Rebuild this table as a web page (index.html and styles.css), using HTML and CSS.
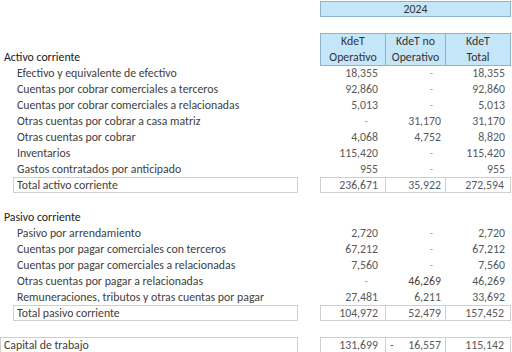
FILE: index.html
```html
<!DOCTYPE html>
<html lang="es">
<head>
<meta charset="utf-8">
<link rel="stylesheet" href="styles.css">
</head>
<body>
<div class="sheet">
  <div class="row">
    <div class="label"></div>
    <div class="year">2024</div>
  </div>
  <div class="row"></div>
  <div class="row head">
    <div class="label section">Activo corriente</div>
    <div class="hbox">
      <div class="hcell c1">KdeT<br>Operativo</div>
      <div class="hcell c2">KdeT no<br>Operativo</div>
      <div class="hcell c3">KdeT<br>Total</div>
    </div>
  </div>

  <div class="row"><div class="label item">Efectivo y equivalente de efectivo</div><div class="nums"><span class="n c1">18,355</span><span class="n c2 dash">-</span><span class="n c3">18,355</span></div></div>
  <div class="row"><div class="label item">Cuentas por cobrar comerciales a terceros</div><div class="nums"><span class="n c1">92,860</span><span class="n c2 dash">-</span><span class="n c3">92,860</span></div></div>
  <div class="row"><div class="label item">Cuentas por cobrar comerciales a relacionadas</div><div class="nums"><span class="n c1">5,013</span><span class="n c2 dash">-</span><span class="n c3">5,013</span></div></div>
  <div class="row"><div class="label item">Otras cuentas por cobrar a casa matriz</div><div class="nums"><span class="n c1 dash">-</span><span class="n c2">31,170</span><span class="n c3">31,170</span></div></div>
  <div class="row"><div class="label item">Otras cuentas por cobrar</div><div class="nums"><span class="n c1">4,068</span><span class="n c2">4,752</span><span class="n c3">8,820</span></div></div>
  <div class="row"><div class="label item">Inventarios</div><div class="nums"><span class="n c1">115,420</span><span class="n c2 dash">-</span><span class="n c3">115,420</span></div></div>
  <div class="row"><div class="label item">Gastos contratados por anticipado</div><div class="nums"><span class="n c1">955</span><span class="n c2 dash">-</span><span class="n c3">955</span></div></div>
  <div class="row"><div class="label"><div class="tbox indent">Total activo corriente</div></div><div class="nums boxed"><span class="n c1">236,671</span><span class="n c2">35,922</span><span class="n c3">272,594</span></div></div>
  <div class="row"></div>

  <div class="row"><div class="label section">Pasivo corriente</div></div>
  <div class="row"><div class="label item">Pasivo por arrendamiento</div><div class="nums"><span class="n c1">2,720</span><span class="n c2 dash">-</span><span class="n c3">2,720</span></div></div>
  <div class="row"><div class="label item">Cuentas por pagar comerciales con terceros</div><div class="nums"><span class="n c1">67,212</span><span class="n c2 dash">-</span><span class="n c3">67,212</span></div></div>
  <div class="row"><div class="label item">Cuentas por pagar comerciales a relacionadas</div><div class="nums"><span class="n c1">7,560</span><span class="n c2 dash">-</span><span class="n c3">7,560</span></div></div>
  <div class="row"><div class="label item">Otras cuentas por pagar a relacionadas</div><div class="nums"><span class="n c1 dash">-</span><span class="n c2 warm">46,269</span><span class="n c3">46,269</span></div></div>
  <div class="row"><div class="label item">Remuneraciones, tributos y otras cuentas por pagar</div><div class="nums"><span class="n c1">27,481</span><span class="n c2">6,211</span><span class="n c3">33,692</span></div></div>
  <div class="row"><div class="label"><div class="tbox indent">Total pasivo corriente</div></div><div class="nums boxed"><span class="n c1">104,972</span><span class="n c2">52,479</span><span class="n c3">157,452</span></div></div>
  <div class="row"></div>
  <div class="row"><div class="label"><div class="tbox flush">Capital de trabajo</div></div><div class="nums boxed"><span class="n c1">131,699</span><span class="n c2 neg"><span>-</span><span>16,557</span></span><span class="n c3">115,142</span></div></div>
</div>
</body>
</html>
```
FILE: styles.css
```css
html, body {
  margin: 0;
  padding: 0;
  background: #ffffff;
}
body {
  font-family: "Carlito", "Lato", "Liberation Sans", sans-serif;
  font-size: 11.8px;
  color: #404040;
  width: 512px;
  height: 352px;
  overflow: hidden;
}
.sheet {
  padding-top: 1px;
  display: flex;
  flex-direction: column;
}
.row {
  display: flex;
  height: 16px;
  line-height: 16px;
  flex: none;
}
.row.head {
  height: 32px;
  align-items: flex-end;
}
.label {
  width: 298px;
  flex: none;
  margin-right: 22px;
  white-space: nowrap;
  box-sizing: border-box;
}
.section {
  padding-left: 4px;
  color: #1a1a1a;
  height: 16px;
}
.item {
  padding-left: 17px;
}
.year {
  width: 191px;
  box-sizing: border-box;
  background: #c5e6f8;
  border: 1px solid #8fb2cc;
  text-align: center;
  color: #333333;
  line-height: 14px;
}
.hbox {
  display: flex;
  height: 33px;
  align-self: flex-start;
  background: #c5e6f8;
  border: 1px solid #8fb2cc;
  box-sizing: border-box;
  width: 191px;
}
.hcell {
  text-align: center;
  line-height: 15.5px;
  color: #333333;
  box-sizing: border-box;
}
.hcell + .hcell {
  border-left: 1px solid #8fb2cc;
}
.hcell.c1 { width: 64px; }
.hcell.c2 { width: 60px; }
.hcell.c3 { width: 65px; }
.nums {
  display: flex;
  width: 191px;
  box-sizing: border-box;
  color: #595959;
}
.n {
  text-align: right;
  box-sizing: border-box;
}
.n.c1 { width: 65px; padding-right: 7px; }
.n.c2 { width: 60px; padding-right: 4px; }
.n.c3 { width: 66px; padding-right: 6px; }
.n.dash { color: #b0b0b0; }
.n.c1.dash { padding-right: 17px; }
.n.c2.dash { padding-right: 12px; }
.n.warm { color: #5a4035; }
.nums.boxed {
  border: 1px solid #cfcfcf;
  line-height: 14px;
}
.nums.boxed .n.c1 { width: 64px; }
.nums.boxed .n.c2 { border-left: 1px solid #cfcfcf; }
.nums.boxed .n.c3 { border-left: 1px solid #cfcfcf; width: 65px; }
.neg {
  display: flex;
  justify-content: space-between;
  padding-left: 4px;
}
.tbox {
  border: 1px solid #cfcfcf;
  height: 16px;
  line-height: 14px;
  box-sizing: border-box;
  color: #404040;
}
.tbox.indent {
  margin-left: 13px;
  padding-left: 3px;
}
.tbox.flush {
  padding-left: 3px;
}
```
